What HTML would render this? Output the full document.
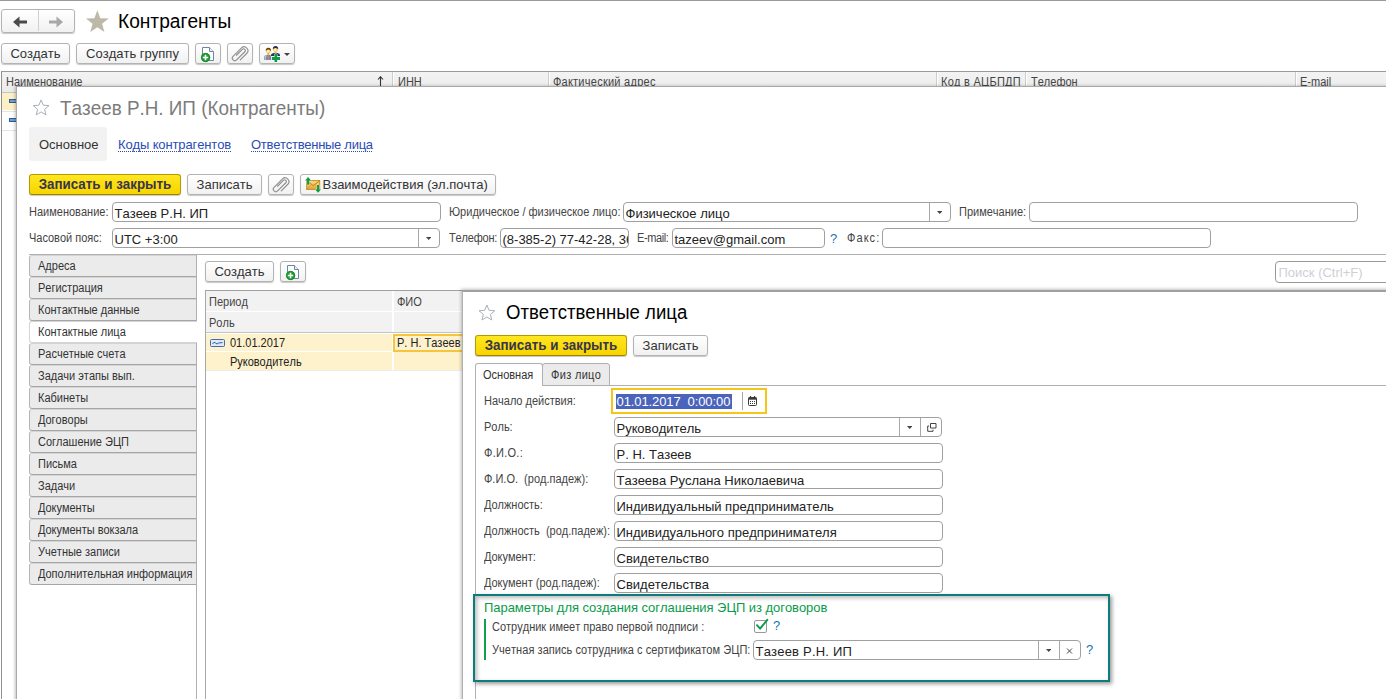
<!DOCTYPE html>
<html lang="ru">
<head>
<meta charset="utf-8">
<title>Контрагенты</title>
<style>
*{box-sizing:border-box;margin:0;padding:0}
html,body{width:1386px;height:699px;overflow:hidden;background:#fff}
body{font-family:"Liberation Sans",sans-serif;font-size:13px;color:#333;position:relative;font-kerning:none}
.abs{position:absolute}
.t{position:absolute;white-space:pre;line-height:1}
.btn{position:absolute;border:1px solid #b3b3b3;border-radius:3px;background:linear-gradient(#ffffff,#f1f1f1);box-shadow:0 1px 1px rgba(0,0,0,.22);font-size:13px;color:#333;text-align:center;white-space:nowrap}
.btn span{position:absolute;left:0;right:0;text-align:center;line-height:1}
.ybtn{background:linear-gradient(#ffe720,#f8d400);border-color:#b49a00;border-bottom-color:#9a8400;font-weight:bold;color:#37364a}
.ybtn span{font-size:14px;transform:scaleX(.955);letter-spacing:0}
.inp{position:absolute;border:1px solid #a0a0a0;border-radius:4px;background:#fff;font-size:13px;color:#222;white-space:pre;overflow:hidden}
.inp span{position:absolute;left:1.5px;line-height:1}
.lbl{position:absolute;font-size:12px;transform:scaleX(.917);transform-origin:0 0;margin-top:-.85px;color:#444;white-space:pre;line-height:1}
.vt{position:absolute;left:29px;width:167px;height:22px;border:1px solid #b4b4b4;border-top-color:#d4d4d4;border-bottom-color:#a6a6a6;border-right:none;border-radius:3px 0 0 3px;background:#ebebeb;font-size:12px;color:#333}
.vt span{position:absolute;left:8px;top:4px;line-height:1;white-space:nowrap;transform:scaleX(.917);transform-origin:0 0}
.hd{position:absolute;font-size:12px;transform:scaleX(.917);transform-origin:0 0;margin-top:-.85px;color:#444;line-height:1;white-space:nowrap}
.lnk{color:#2a4cb4;text-decoration:underline dotted #2a4cb4 1px;text-underline-offset:1.5px;text-decoration-skip-ink:none}
.q{position:absolute;font-size:14px;color:#1a73b8;line-height:1}
</style>
</head>
<body>
<svg width="0" height="0" style="position:absolute">
<defs>
<symbol id="i-doc" viewBox="0 0 16 18">
<path d="M2.5 2.5 H9.5 L13.5 6.5 V15.5 H2.5 Z" fill="#fff" stroke="#6f86a3" stroke-width="1"/>
<path d="M9.5 2.5 V6.5 H13.5" fill="#eef2f7" stroke="#6f86a3" stroke-width="1"/>
<circle cx="5.6" cy="12.5" r="4.5" fill="#1f9c34"/>
<circle cx="5.6" cy="12.5" r="4.2" fill="none" stroke="#0f7f22" stroke-width=".7"/>
<path d="M5.5 9.8 V15.2 M2.8 12.5 H8.2" stroke="#fff" stroke-width="1.6"/>
</symbol>
<symbol id="i-clip" viewBox="0 0 20 18">
<path d="M10.27 15.82 L16.85 9.24 A3.75 3.75 0 0 0 11.55 3.94 L3.06 12.43 A2.50 2.50 0 0 0 6.60 15.96 L14.80 7.76 A1.70 1.70 0 0 0 12.39 5.36 L6.52 11.22" fill="none" stroke="#8e8e8e" stroke-width="1.15" stroke-linecap="round"/>
</symbol>
<symbol id="i-ppl" viewBox="0 0 18 18">
<path d="M1 14.9 V12.4 Q1 10.2 3.4 9.9 H7 Q8.2 10.1 8.2 12 V14.9 Z" fill="#6a8db3"/>
<path d="M2.2 14.9 V12.6 Q2.2 11 3.6 10.9" fill="none" stroke="#dfe8f2" stroke-width=".9"/>
<path d="M4.7 9.6 H6 L6.2 14.9 H4.5 Z" fill="#e27a52"/>
<ellipse cx="5.4" cy="5.9" rx="2.4" ry="2.7" fill="#f4d672"/>
<ellipse cx="5.2" cy="5.8" rx="1" ry="1.5" fill="#fdf3b8"/>
<path d="M2.8 6.2 Q2.4 2.8 5.4 2.7 Q8.4 2.8 8 6.2 Q7.4 4.6 5.4 4.6 Q3.4 4.6 2.8 6.2 Z" fill="#6e3a08"/>
<path d="M4.4 8.2 H6.4 L6.2 10 H4.6 Z" fill="#d9a63e"/>
<path d="M7.9 11 V10 Q8.2 8.2 10.6 7.9 H14.6 Q16.8 8.2 17 10 V11 Z" fill="#283264"/>
<path d="M11.6 6.6 H13.6 L13.4 8.6 H11.8 Z" fill="#d9a63e"/>
<ellipse cx="12.5" cy="4.3" rx="2.5" ry="2.9" fill="#f4d672"/>
<ellipse cx="12.3" cy="4.4" rx="1" ry="1.5" fill="#fdf3b8"/>
<path d="M9.9 4.6 Q9.4 1 12.5 0.9 Q15.6 1 15.1 4.6 Q14.5 2.9 12.5 2.9 Q10.5 2.9 9.9 4.6 Z" fill="#2e2a50"/>
<path d="M11.5 9 H14.1 V11.9 H17 V14.9 H14.1 V16.9 H11.5 V14.9 H8.9 V11.9 H11.5 Z" fill="#0c9c46" stroke="#fff" stroke-width=".7" paint-order="stroke"/>
</symbol>
<symbol id="i-mail" viewBox="0 0 16 16">
<defs><linearGradient id="mg" x1="0" y1="0" x2="0" y2="1"><stop offset="0" stop-color="#fbe08e"/><stop offset="1" stop-color="#e2a234"/></linearGradient></defs>
<rect x="1.7" y="3.6" width="13" height="8.8" fill="url(#mg)" stroke="#c88a1e" stroke-width="1"/>
<path d="M2 4 L8.2 8.6 L14.4 4" fill="none" stroke="#c07c14" stroke-width="1"/>
<path d="M2 12 L6.4 7.6 M14.4 12 L10 7.6" fill="none" stroke="#d99a32" stroke-width=".8"/>
<path d="M3.1 0.1 L6.1 3.4 H4.2 V7.8 H2.1 V3.4 H0.1 Z" fill="#0c9c48" stroke="#fff" stroke-width=".5" paint-order="stroke"/>
<path d="M13.1 15.7 L10.1 12.4 H12.1 V8 H14.2 V12.4 H16.1 Z" fill="#0c9c48" stroke="#fff" stroke-width=".5" paint-order="stroke"/>
</symbol>
<symbol id="i-dd" viewBox="0 0 7 4"><path d="M0 0 H7 L3.5 3.6 Z" fill="#444"/></symbol>
</defs></svg>
<!-- top line -->
<div class="abs" style="left:0;top:0;width:1386px;height:1px;background:#9a9a9a"></div>

<!-- nav buttons -->
<div class="btn" style="left:1px;top:9px;width:74px;height:24px"></div>
<div class="abs" style="left:38px;top:10px;width:1px;height:21px;background:#d0d0d0"></div>
<svg class="abs" style="left:12px;top:14.5px" width="16" height="14" viewBox="0 0 16 14"><path d="M1 7 L7.5 1.5 L7.5 5.5 L15 5.5 L15 8.5 L7.5 8.5 L7.5 12.5 Z" fill="#4a4a4a"/></svg>
<svg class="abs" style="left:48px;top:14.5px" width="16" height="14" viewBox="0 0 16 14"><path d="M15 7 L8.5 1.5 L8.5 5.5 L1 5.5 L1 8.5 L8.5 8.5 L8.5 12.5 Z" fill="#a8a8a8"/></svg>
<!-- star -->
<svg class="abs" style="left:85px;top:9px" width="25" height="24" viewBox="0 0 25 24"><path d="M12.35 1.30 L15.29 9.25 L23.76 9.59 L17.11 14.85 L19.40 23.01 L12.35 18.30 L5.30 23.01 L7.59 14.85 L0.94 9.59 L9.41 9.25 Z" fill="#bdb8a8"/></svg>
<div class="t" style="left:118px;top:11px;font-size:20px;transform:scaleX(.957);transform-origin:0 0;color:#000">Контрагенты</div>

<!-- toolbar -->
<div class="btn" style="left:1px;top:43px;width:69px;height:21px"><span style="top:2.5px">Создать</span></div>
<div class="btn" style="left:76px;top:43px;width:113px;height:21px"><span style="top:2.5px">Создать группу</span></div>
<div class="btn" style="left:195px;top:43px;width:26px;height:21px"></div>
<svg class="abs" style="left:200px;top:45px" width="16" height="18"><use href="#i-doc"/></svg>
<div class="btn" style="left:227px;top:43px;width:26px;height:21px"></div>
<svg class="abs" style="left:230px;top:44px" width="20" height="18"><use href="#i-clip"/></svg>
<div class="btn" style="left:259px;top:43px;width:36px;height:21px"></div>
<svg class="abs" style="left:263px;top:45px" width="18" height="18"><use href="#i-ppl"/></svg>
<svg class="abs" style="left:284px;top:53px" width="6" height="3.5"><use href="#i-dd"/></svg>

<!-- main table header -->
<div class="abs" style="left:1px;top:71px;width:1385px;height:21px;background:linear-gradient(#f3f3f3,#ebebeb);border-top:1px solid #9a9a9a;border-left:1px solid #8e8e8e"></div>
<div class="abs" style="left:392px;top:72px;width:1px;height:14px;background:#cdcdcd"></div><div class="abs" style="left:393px;top:72px;width:1px;height:14px;background:#fff"></div>
<div class="abs" style="left:548px;top:72px;width:1px;height:14px;background:#cdcdcd"></div><div class="abs" style="left:549px;top:72px;width:1px;height:14px;background:#fff"></div>
<div class="abs" style="left:936px;top:72px;width:1px;height:14px;background:#cdcdcd"></div><div class="abs" style="left:937px;top:72px;width:1px;height:14px;background:#fff"></div>
<div class="abs" style="left:1025px;top:72px;width:1px;height:14px;background:#cdcdcd"></div><div class="abs" style="left:1026px;top:72px;width:1px;height:14px;background:#fff"></div>
<div class="abs" style="left:1295px;top:72px;width:1px;height:14px;background:#cdcdcd"></div><div class="abs" style="left:1296px;top:72px;width:1px;height:14px;background:#fff"></div>
<svg class="abs" style="left:377px;top:76px" width="7" height="10" viewBox="0 0 7 10"><path d="M3.5 0.5 L3.5 10 M1 3.5 L3.5 0.7 L6 3.5" fill="none" stroke="#333" stroke-width="1.1"/></svg>
<div class="hd" style="left:6px;top:77px">Наименование</div>
<div class="hd" style="left:398px;top:77px">ИНН</div>
<div class="hd" style="left:553px;top:77px;letter-spacing:.28px">Фактический адрес</div>
<div class="hd" style="left:941px;top:77px;letter-spacing:.28px">Код в АЦБПДП</div>
<div class="hd" style="left:1031px;top:77px">Телефон</div>
<div class="hd" style="left:1300px;top:77px">E-mail</div>


<!-- rows under header (left sliver) -->
<div class="abs" style="left:1px;top:92px;width:16px;height:620px;background:#fff;border-left:1px solid #8e8e8e"></div>
<div class="abs" style="left:2px;top:92px;width:15px;height:1px;background:#c4c4c4"></div>
<div class="abs" style="left:2px;top:93px;width:15px;height:17px;background:#fdf0c4"></div>
<div class="abs" style="left:2px;top:111px;width:15px;height:1px;background:#e4e4e4"></div>
<div class="abs" style="left:2px;top:130px;width:15px;height:1px;background:#e4e4e4"></div>
<div class="abs" style="left:9px;top:99px;width:8px;height:4px;background:#6f9fd0;border:1px solid #2f5f98"></div>
<div class="abs" style="left:9px;top:118px;width:8px;height:4px;background:#6f9fd0;border:1px solid #2f5f98"></div>
<!-- panel 1 -->
<div id="p1" class="abs" style="left:16px;top:86px;width:1380px;height:620px;background:#fff;border-left:1px solid #a9a9a9;border-top:1px solid #a9a9a9;box-shadow:-1px 0 3px rgba(0,0,0,.25)"></div>
<svg class="abs" style="left:32px;top:99px" width="18" height="18" viewBox="0 0 18 18"><path d="M9.10 0.90 L11.27 6.21 L16.99 6.64 L12.62 10.34 L13.98 15.91 L9.10 12.90 L4.22 15.91 L5.58 10.34 L1.21 6.64 L6.93 6.21 Z" fill="none" stroke="#a8b0b8" stroke-width="1"/></svg>
<div class="t" style="left:60px;top:98px;font-size:20px;transform:scaleX(.943);transform-origin:0 0;color:#7c7c7c">Тазеев Р.Н. ИП (Контрагенты)</div>

<div class="abs" style="left:29px;top:127px;width:78px;height:34px;background:#f2f2f2;border-radius:3px"></div>
<div class="t" style="left:39px;top:138px;font-size:13px;color:#333">Основное</div>
<div class="t lnk" style="left:118px;top:138px;font-size:13px;letter-spacing:-.12px">Коды контрагентов</div>
<div class="t lnk" style="left:251px;top:138px;font-size:13px;letter-spacing:-.28px">Ответственные лица</div>

<div class="btn ybtn" style="left:29px;top:174px;width:152px;height:21px"><span style="top:2px">Записать и закрыть</span></div>
<div class="btn" style="left:187px;top:174px;width:75px;height:21px"><span style="top:2.5px">Записать</span></div>
<div class="btn" style="left:268px;top:174px;width:26px;height:21px"></div>
<svg class="abs" style="left:271px;top:175px" width="20" height="18"><use href="#i-clip"/></svg>
<div class="btn" style="left:300px;top:174px;width:196px;height:21px"><span style="top:2.5px;left:21.5px;right:auto">Взаимодействия (эл.почта)</span></div>
<svg class="abs" style="left:305px;top:177px;overflow:visible" width="16" height="16"><use href="#i-mail"/></svg>

<div class="lbl" style="left:29px;top:207px">Наименование:</div>
<div class="inp" style="left:112px;top:202px;width:329px;height:20px"><span style="top:4px">Тазеев Р.Н. ИП</span></div>
<div class="lbl" style="left:449px;top:207px">Юридическое / физическое лицо:</div>
<div class="inp" style="left:623px;top:202px;width:328px;height:20px"><span style="top:4px">Физическое лицо</span></div>
<div class="lbl" style="left:959px;top:207px">Примечание:</div>
<div class="inp" style="left:1029px;top:202px;width:329px;height:20px"></div>

<div class="lbl" style="left:29px;top:233px">Часовой пояс:</div>
<div class="inp" style="left:112px;top:228px;width:328px;height:20px"><span style="top:4px">UTC +3:00</span></div>
<div class="lbl" style="left:449px;top:233px;letter-spacing:-.2px">Телефон:</div>
<div class="inp" style="left:500px;top:228px;width:129px;height:20px"><span style="top:4px">(8-385-2) 77-42-28, 36</span></div>
<div class="lbl" style="left:637px;top:233px;letter-spacing:-.45px">E-mail:</div>
<div class="inp" style="left:672px;top:228px;width:153px;height:20px"><span style="top:4px">tazeev@gmail.com</span></div>
<div class="q" style="left:830px;top:232px;font-size:13px">?</div>
<div class="lbl" style="left:847px;top:233px;letter-spacing:1.2px">Факс:</div>
<div class="inp" style="left:882px;top:228px;width:329px;height:20px"></div>

<div class="abs" style="left:929px;top:203px;width:1px;height:18px;background:#a8a8a8"></div>
<svg class="abs" style="left:937px;top:211px" width="5.4" height="3.3"><use href="#i-dd"/></svg>
<div class="abs" style="left:418px;top:229px;width:1px;height:18px;background:#a8a8a8"></div>
<svg class="abs" style="left:426px;top:237px" width="5.4" height="3.3"><use href="#i-dd"/></svg>
<!-- pages group -->
<div class="abs" style="left:29px;top:254px;width:1370px;height:1px;background:#b0b0b0"></div>
<div class="abs" style="left:196px;top:254px;width:1px;height:460px;background:#b0b0b0;z-index:1"></div>
<div class="vt" style="top:255px"><span>Адреса</span></div>
<div class="vt" style="top:277px"><span>Регистрация</span></div>
<div class="vt" style="top:299px"><span>Контактные данные</span></div>
<div class="vt" style="top:321px;background:#fff;border-color:#d4d4d4;width:168px;z-index:2"><span>Контактные лица</span></div>
<div class="vt" style="top:343px"><span>Расчетные счета</span></div>
<div class="vt" style="top:365px"><span>Задачи этапы вып.</span></div>
<div class="vt" style="top:387px"><span>Кабинеты</span></div>
<div class="vt" style="top:409px"><span>Договоры</span></div>
<div class="vt" style="top:431px"><span>Соглашение ЭЦП</span></div>
<div class="vt" style="top:453px"><span>Письма</span></div>
<div class="vt" style="top:475px"><span>Задачи</span></div>
<div class="vt" style="top:497px"><span>Документы</span></div>
<div class="vt" style="top:519px"><span>Документы вокзала</span></div>
<div class="vt" style="top:541px"><span>Учетные записи</span></div>
<div class="vt" style="top:563px"><span>Дополнительная информация</span></div>

<div class="btn" style="left:205px;top:261px;width:69px;height:21px"><span style="top:2.5px">Создать</span></div>
<div class="btn" style="left:280px;top:261px;width:26px;height:21px"></div>
<svg class="abs" style="left:285px;top:263px" width="16" height="18"><use href="#i-doc"/></svg>
<div class="inp" style="left:1275px;top:261px;width:120px;height:22px;border-color:#999"><span style="top:4px;left:2.5px;color:#cfcfd6">Поиск (Ctrl+F)</span></div>

<!-- inner table -->
<div class="abs" style="left:205px;top:290px;width:260px;height:420px;border-left:1px solid #a8a8a8;border-top:1px solid #a0a0a0;background:#fff"></div>
<div class="abs" style="left:206px;top:291px;width:186px;height:20px;background:#f2f2f2"></div>
<div class="abs" style="left:394px;top:291px;width:70px;height:20px;background:#f2f2f2"></div>
<div class="abs" style="left:206px;top:312px;width:186px;height:20px;background:#f2f2f2"></div>
<div class="abs" style="left:394px;top:312px;width:70px;height:20px;background:#f2f2f2"></div>
<div class="abs" style="left:206px;top:332px;width:258px;height:1px;background:#c4c4c4"></div>
<div class="hd" style="left:209px;top:296.5px">Период</div>
<div class="hd" style="left:397px;top:296.5px">ФИО</div>
<div class="hd" style="left:209px;top:317.5px">Роль</div>
<div class="abs" style="left:206px;top:334px;width:186px;height:17px;background:#fdf2cc"></div>
<div class="abs" style="left:206px;top:352px;width:186px;height:18px;background:#fdf2cc"></div>
<div class="abs" style="left:394px;top:352px;width:70px;height:18px;background:#fdf2cc"></div>
<div class="abs" style="left:206px;top:370px;width:258px;height:1px;background:#ececec"></div>
<div class="abs" style="left:393px;top:334px;width:72px;height:18px;border:2px solid #f4c63e;background:#fdf2cc"></div>
<div class="t" style="left:230px;top:338px;font-size:12px;transform:scaleX(.917);transform-origin:0 0;margin-top:-.85px;color:#222">01.01.2017</div>
<div class="t" style="left:397px;top:338px;font-size:12px;transform:scaleX(.917);transform-origin:0 0;margin-top:-.85px;color:#222">Р. Н. Тазеев</div>
<div class="t" style="left:230px;top:357px;font-size:12px;transform:scaleX(.917);transform-origin:0 0;margin-top:-.85px;color:#222">Руководитель</div>
<svg class="abs" style="left:210px;top:339px" width="15" height="8" viewBox="0 0 15 8"><rect x=".5" y=".5" width="14" height="7" rx="1" fill="#dfe9f7" stroke="#3f6db0"/><path d="M2.5 5 Q4 2 5.5 4 T8.5 4 L12.5 3.6" fill="none" stroke="#2f5ea5" stroke-width="1"/></svg>

<!-- panel 2 -->
<div id="p2" class="abs" style="left:462px;top:290px;width:940px;height:420px;background:#fff;border-left:1px solid #b0b0b0;border-top:2px solid #a0a0a0;box-shadow:-1px -1px 3px rgba(0,0,0,.25)"></div>
<svg class="abs" style="left:478px;top:304px" width="18" height="18" viewBox="0 0 18 18"><path d="M8.90 1.00 L11.07 6.31 L16.79 6.74 L12.42 10.44 L13.78 16.01 L8.90 13.00 L4.02 16.01 L5.38 10.44 L1.01 6.74 L6.73 6.31 Z" fill="none" stroke="#a8b0b8" stroke-width="1"/></svg>
<div class="t" style="left:506px;top:302px;font-size:20px;transform:scaleX(.929);transform-origin:0 0;color:#000">Ответственные лица</div>
<div class="btn ybtn" style="left:475px;top:335px;width:152px;height:21px"><span style="top:2px">Записать и закрыть</span></div>
<div class="btn" style="left:633px;top:335px;width:75px;height:21px"><span style="top:2.5px">Записать</span></div>

<!-- tabs -->
<div class="abs" style="left:475px;top:385px;width:920px;height:1px;background:#b0b0b0"></div>
<div class="abs" style="left:475px;top:385px;width:1px;height:320px;background:#b0b0b0"></div>
<div class="abs" style="left:542px;top:363px;width:68px;height:23px;border:1px solid #b0b0b0;border-radius:3px 3px 0 0;background:#ebebeb"></div>
<div class="abs" style="left:475px;top:363px;width:68px;height:23px;border:1px solid #b0b0b0;border-bottom:none;border-radius:3px 3px 0 0;background:#fff"></div>
<div class="t" style="left:483px;top:370px;font-size:12px;transform:scaleX(.917);transform-origin:0 0;margin-top:-.85px;color:#333">Основная</div>
<div class="t" style="left:551px;top:370px;letter-spacing:.35px;font-size:12px;transform:scaleX(.917);transform-origin:0 0;margin-top:-.85px;color:#333">Физ лицо</div>

<div class="lbl" style="left:484px;top:396px">Начало действия:</div>
<div class="abs" style="left:611px;top:388px;width:156px;height:26px;border:2px solid #f7c518;border-radius:0;background:#fff"></div>
<div class="abs" style="left:616px;top:394px;width:116px;height:15px;background:#4a64bc"></div>
<div class="t" style="left:616.5px;top:395px;font-size:13px;letter-spacing:-.1px;color:#fff">01.01.2017  0:00:00</div>
<div class="abs" style="left:742px;top:392px;width:1px;height:18px;background:#a6a6a6"></div>

<svg class="abs" style="left:748px;top:396px" width="9" height="10" viewBox="0 0 9 10"><rect x=".5" y="1.5" width="8" height="8" rx="1" fill="#fff" stroke="#3a3a3a"/><rect x=".5" y="1.5" width="8" height="2.2" fill="#3a3a3a"/><path d="M2.5 0 V2 M6.5 0 V2" stroke="#3a3a3a" stroke-width="1.2"/><path d="M2 5.5 H7 M2 7.5 H7" stroke="#3a3a3a" stroke-width="1" stroke-dasharray="1 1"/></svg>
<div class="lbl" style="left:484px;top:422px">Роль:</div>
<div class="inp" style="left:614px;top:417px;width:328px;height:20px"><span style="top:4px">Руководитель</span></div>
<div class="abs" style="left:899px;top:418px;width:1px;height:18px;background:#a8a8a8"></div>
<div class="abs" style="left:920px;top:418px;width:1px;height:18px;background:#a8a8a8"></div>
<svg class="abs" style="left:907px;top:426px" width="5.4" height="3.3"><use href="#i-dd"/></svg>
<svg class="abs" style="left:926.5px;top:423px" width="10" height="9" viewBox="0 0 10 9"><path d="M3.5 0.5 H9 V5 H3.5 Z" fill="#fff" stroke="#444" stroke-width="1"/><path d="M2.2 3 H0.7 V8.3 H6 V6.6" fill="none" stroke="#444" stroke-width="1"/></svg>
<div class="lbl" style="left:484px;top:448px;letter-spacing:.3px">Ф.И.О.:</div>
<div class="inp" style="left:614px;top:443px;width:329px;height:20px"><span style="top:4px">Р. Н. Тазеев</span></div>
<div class="lbl" style="left:484px;top:474px">Ф.И.О.  (род.падеж):</div>
<div class="inp" style="left:614px;top:469px;width:329px;height:20px"><span style="top:4px">Тазеева Руслана Николаевича</span></div>
<div class="lbl" style="left:484px;top:500px">Должность:</div>
<div class="inp" style="left:614px;top:495px;width:329px;height:20px"><span style="top:4px">Индивидуальный предприниматель</span></div>
<div class="lbl" style="left:484px;top:526px">Должность  (род.падеж):</div>
<div class="inp" style="left:614px;top:521px;width:329px;height:20px"><span style="top:4px">Индивидуального предпринимателя</span></div>
<div class="lbl" style="left:484px;top:552px">Документ:</div>
<div class="inp" style="left:614px;top:547px;width:329px;height:20px"><span style="top:4px">Свидетельство</span></div>
<div class="lbl" style="left:484px;top:578px">Документ (род.падеж):</div>
<div class="inp" style="left:614px;top:573px;width:329px;height:20px"><span style="top:4px">Свидетельства</span></div>

<!-- highlighted group -->
<div class="abs" style="left:473px;top:594px;width:637px;height:88px;border:2px solid #0f7b7a;box-shadow:2px 2px 4px rgba(0,0,0,.4),inset 2px 2px 4px rgba(0,0,0,.28);background:#fff"></div>
<div class="t" style="left:484px;top:600.5px;font-size:13px;letter-spacing:-.05px;color:#0a9a4a">Параметры для создания соглашения ЭЦП из договоров</div>
<div class="abs" style="left:484px;top:619px;width:2px;height:41px;background:#13a04c"></div>
<div class="lbl" style="left:492px;top:622px">Сотрудник имеет право первой подписи :</div>
<div class="abs" style="left:754px;top:620px;width:13px;height:13px;border:1px solid #999;border-radius:2px;background:#fff"></div>
<svg class="abs" style="left:754px;top:618px;overflow:visible" width="15" height="15" viewBox="0 0 15 15"><path d="M3 7.2 L6.1 10.7 L13.3 1.8" fill="none" stroke="#0e9a4c" stroke-width="1.9" stroke-linecap="round" stroke-linejoin="round"/></svg>
<div class="q" style="left:773px;top:618.5px;font-size:13px">?</div>
<div class="lbl" style="left:492px;top:645px;letter-spacing:.06px">Учетная запись сотрудника с сертификатом ЭЦП:</div>
<div class="inp" style="left:753px;top:640px;width:328px;height:20px"><span style="top:4px;letter-spacing:.2px">Тазеев Р.Н. ИП</span></div>
<div class="abs" style="left:1038px;top:641px;width:1px;height:18px;background:#a8a8a8"></div>
<div class="abs" style="left:1059px;top:641px;width:1px;height:18px;background:#a8a8a8"></div>
<svg class="abs" style="left:1046px;top:649px" width="5.4" height="3.3"><use href="#i-dd"/></svg>
<svg class="abs" style="left:1066px;top:648px" width="7" height="6" viewBox="0 0 7 6"><path d="M1 0.5 L6 5.5 M6 0.5 L1 5.5" stroke="#444" stroke-width="1" fill="none"/></svg>
<div class="q" style="left:1086px;top:643px;font-size:13px">?</div>

</body>
</html>
